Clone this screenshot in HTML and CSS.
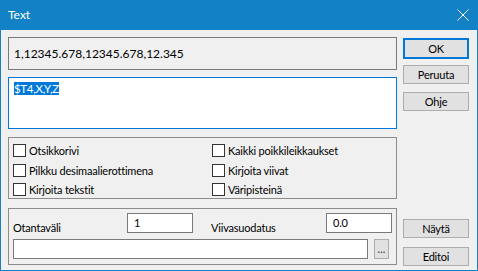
FILE: index.html
```html
<!DOCTYPE html>
<html lang="fi">
<head>
  <meta charset="UTF-8">
  <meta name="viewport" content="width=device-width, initial-scale=1.0">
  <title>Text</title>
  <link rel="stylesheet" href="styles.css">
</head>
<body>
  <div class="window">
    <div class="titlebar">
      <span class="title">Text</span>
      <svg class="close" width="12" height="12" viewBox="0 0 12 12">
        <path d="M0.5 0.5 L11.5 11.5 M11.5 0.5 L0.5 11.5" stroke="#fff" stroke-width="1" fill="none"/>
      </svg>
    </div>

    <div class="content">
      <div class="main">
        <div class="readout">1,12345.678,12345.678,12.345</div>

        <div class="editor"><span class="selected">$T4,X,Y,Z</span></div>

        <div class="group options">
          <label class="check"><span class="box"></span>Otsikkorivi</label>
          <label class="check"><span class="box"></span>Kaikki poikkileikkaukset</label>
          <label class="check"><span class="box"></span>Pilkku desimaalierottimena</label>
          <label class="check"><span class="box"></span>Kirjoita viivat</label>
          <label class="check"><span class="box"></span>Kirjoita tekstit</label>
          <label class="check"><span class="box"></span>Väripisteinä</label>
        </div>

        <div class="group params">
          <div class="param-row">
            <span class="label label-first">Otantaväli</span>
            <div class="field small">1</div>
            <span class="label label-second">Viivasuodatus</span>
            <div class="field small">0.0</div>
          </div>
          <div class="param-row">
            <div class="field wide"></div>
            <button class="browse">...</button>
          </div>
        </div>
      </div>

      <div class="side">
        <button class="btn default">OK</button>
        <button class="btn">Peruuta</button>
        <button class="btn">Ohje</button>
        <button class="btn push-down">Näytä</button>
        <button class="btn">Editoi</button>
      </div>
    </div>
  </div>
</body>
</html>
```

FILE: styles.css
```css
body {
  margin: 0;
  font-family: Lato, "Noto Sans", sans-serif;
  font-size: 11px;
  letter-spacing: -0.2px;
  color: #000;
  background: #f0f0f0;
}
.window {
  width: 478px;
  height: 271px;
  box-sizing: border-box;
  border: 1px solid #1281c5;
  border-top: none;
  background: #f0f0f0;
  display: flex;
  flex-direction: column;
}
.titlebar {
  height: 30px;
  background: #1281c5;
  color: #fff;
  display: flex;
  align-items: center;
  justify-content: space-between;
  padding: 0 9px 0 8px;
  margin: 0 -1px;
  flex-shrink: 0;
}
.title {
  font-size: 12px;
  letter-spacing: 0;
  padding-bottom: 1px;
}
.content {
  flex: 1;
  display: flex;
  padding-left: 7px;
}
.main {
  width: 389px;
  padding-top: 7px;
  display: flex;
  flex-direction: column;
}
.readout {
  height: 33px;
  box-sizing: border-box;
  border: 1px solid #7a7a7a;
  background: #f0f0f0;
  padding: 0 5px;
  display: flex;
  align-items: center;
  font-size: 12px;
  letter-spacing: 0;
}
.editor {
  height: 52px;
  box-sizing: border-box;
  margin-top: 7px;
  border: 1px solid #0078d7;
  background: #fff;
  padding: 3px 5px;
  line-height: 15px;
  font-size: 11.5px;
  letter-spacing: -0.3px;
}
.selected {
  background: #0078d7;
  color: #fff;
}
.group {
  box-sizing: border-box;
  border: 1px solid #8c8c8c;
}
.options {
  height: 62px;
  margin-top: 8px;
  padding: 6px 4px 0;
  display: grid;
  grid-template-columns: 199px 1fr;
  grid-auto-rows: 19.5px;
}
.check {
  display: flex;
  align-items: flex-start;
  gap: 3px;
  line-height: 13px;
  white-space: nowrap;
}
.box {
  width: 13px;
  height: 13px;
  box-sizing: border-box;
  border: 1px solid #333;
  background: #fff;
  flex-shrink: 0;
}
.params {
  height: 57px;
  margin-top: 9px;
  padding: 4px 4px 0;
  display: flex;
  flex-direction: column;
  gap: 6px;
}
.param-row {
  display: flex;
  align-items: flex-start;
  height: 20px;
}
.label {
  margin-top: 8px;
  line-height: 14px;
}
.label-first {
  width: 114px;
}
.label-second {
  width: 115px;
  margin-left: 18px;
}
.field {
  height: 20px;
  box-sizing: border-box;
  border: 1px solid #7a7a7a;
  background: #fff;
  padding: 0 6px;
  line-height: 17px;
}
.field.small {
  width: 66px;
}
.field.wide {
  width: 355px;
}
.browse {
  width: 15px;
  height: 20px;
  margin-left: 6px;
  padding: 0;
  border: 1px solid #adadad;
  background: #e1e1e1;
  font-family: inherit;
  font-size: 11px;
  color: #333;
  line-height: 14px;
}
.side {
  width: 66px;
  margin-left: 6px;
  padding: 8px 0 4px;
  display: flex;
  flex-direction: column;
}
.btn {
  height: 19px;
  padding: 0;
  border: 1px solid #adadad;
  background: #e1e1e1;
  font-family: inherit;
  font-size: 11px;
  letter-spacing: -0.2px;
  color: #000;
  line-height: 15px;
  margin-bottom: 8px;
}
.btn.default {
  height: 21px;
  border: 2px solid #0078d7;
  margin-bottom: 6px;
}
.btn.push-down {
  margin-top: auto;
  margin-bottom: 9px;
}
.btn:last-child {
  margin-bottom: 0;
}
```
